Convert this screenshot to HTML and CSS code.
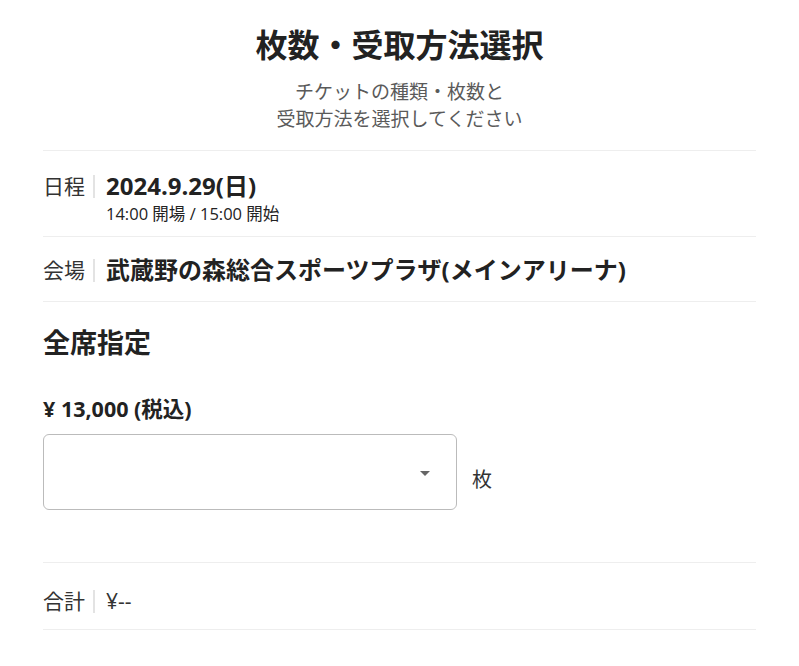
FILE: index.html
```html
<!DOCTYPE html>
<html lang="ja">
<head>
    <meta charset="UTF-8">
    <meta name="viewport" content="width=device-width, initial-scale=1.0">
    <title>枚数・受取方法選択</title>
    <link rel="stylesheet" href="styles.css">
</head>
<body>
    <div class="container">
        <h1>枚数・受取方法選択</h1>
        <p class="lead">チケットの種類・枚数と<br>受取方法を選択してください</p>

        <div class="info-row">
            <span class="label">日程</span>
            <div class="value">
                <div class="value-main">2024.9.29(日)</div>
                <div class="value-sub">14:00 開場 / 15:00 開始</div>
            </div>
        </div>
        <div class="info-row venue">
            <span class="label">会場</span>
            <div class="value">
                <div class="value-main">武蔵野の森総合スポーツプラザ(メインアリーナ)</div>
            </div>
        </div>

        <div class="ticket">
            <h2>全席指定</h2>
            <div class="price">¥ 13,000 (税込)</div>
            <div class="qty">
                <div class="select">
                    <span class="arrow"></span>
                </div>
                <span class="unit">枚</span>
            </div>
        </div>

        <div class="total-row">
            <span class="label">合計</span>
            <span class="total">¥--</span>
        </div>
    </div>
</body>
</html>
```

FILE: styles.css
```css
body {
    margin: 0;
    font-family: 'Open Sans', 'Noto Sans CJK JP', sans-serif;
    background-color: #fff;
    color: #222;
}

.container {
    width: 713px;
    margin: 0 auto;
}

h1 {
    margin: 0;
    padding-top: 23px;
    font-size: 32px;
    line-height: 44px;
    text-align: center;
    font-weight: bold;
    color: #222;
}

.lead {
    margin: 12px 0 0;
    font-size: 19px;
    line-height: 27px;
    text-align: center;
    color: #5a5a5a;
    padding-bottom: 17px;
    border-bottom: 1px solid #eee;
}

.info-row {
    display: flex;
    align-items: flex-start;
    padding: 20px 0 11px;
    border-bottom: 1px solid #eee;
}

.info-row.venue {
    padding: 18px 0 16px;
}

.label {
    font-size: 21px;
    line-height: 30px;
    color: #333;
    display: flex;
    align-items: center;
}

.label::after {
    content: '';
    width: 2px;
    height: 23px;
    margin: 0 11px 0 8px;
    background-color: #e3e3e3;
}

.value-main {
    font-size: 24px;
    line-height: 30px;
    font-weight: bold;
}

.value-sub {
    font-size: 16.5px;
    line-height: 22px;
    margin-top: 2px;
}

.ticket {
    padding: 23px 0 52px;
    border-bottom: 1px solid #eee;
}

h2 {
    margin: 0;
    font-size: 27px;
    line-height: 36px;
    font-weight: bold;
}

.price {
    margin-top: 35px;
    font-size: 21.5px;
    line-height: 26px;
    font-weight: bold;
}

.qty {
    display: flex;
    align-items: center;
    margin-top: 12px;
}

.select {
    box-sizing: border-box;
    width: 414px;
    height: 76px;
    border: 1px solid #bbb;
    border-radius: 6px;
    display: flex;
    align-items: center;
    justify-content: flex-end;
    padding: 3px 26px 0 0;
}

.arrow {
    width: 0;
    height: 0;
    border-left: 5px solid transparent;
    border-right: 5px solid transparent;
    border-top: 5px solid #666;
}

.unit {
    margin-left: 15px;
    padding-top: 12px;
    font-size: 20px;
    color: #333;
}

.total-row {
    display: flex;
    align-items: center;
    padding: 23px 0 13px;
    border-bottom: 1px solid #eee;
}

.total {
    font-size: 21px;
    line-height: 30px;
    color: #333;
}
```
